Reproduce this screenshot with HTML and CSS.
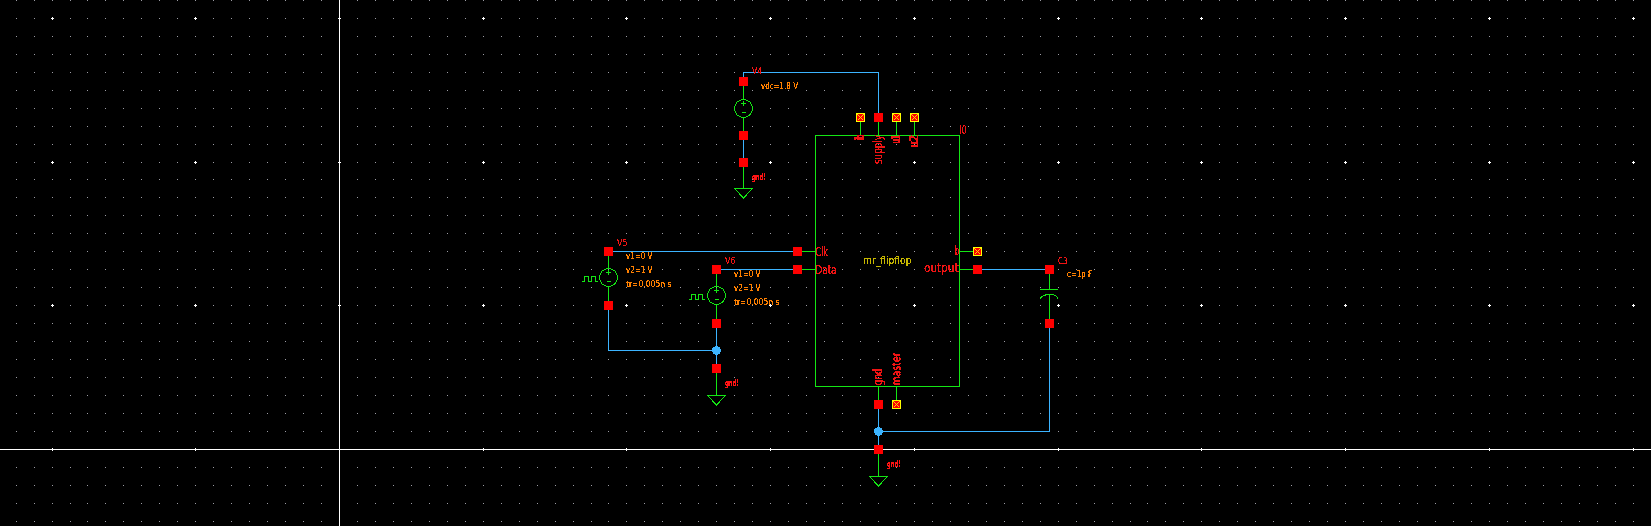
FILE: index.html
```html
<!DOCTYPE html>
<html lang="en">
<head>
<meta charset="utf-8">
<title>Schematic editor</title>
<link rel="stylesheet" href="styles.css">
</head>
<body>
<svg class="canvas" width="1651" height="526" viewBox="0 0 1651 526" xmlns="http://www.w3.org/2000/svg">
  <defs>
    <filter id="aliased" x="-20%" y="-50%" width="140%" height="200%" color-interpolation-filters="sRGB">
      <feComponentTransfer><feFuncA type="discrete" tableValues="0 1 1"/></feComponentTransfer>
    </filter>
    <g id="pad"><rect class="pad" x="-4.5" y="-4.5" width="9" height="9"/></g>
    <g id="pin">
      <rect class="pin-fill" x="-4.5" y="-4.5" width="9" height="9"/>
      <rect class="pin-edge" x="-4" y="-4" width="8" height="8"/>
      <path class="pin-x" d="M-3 -3L3 3M3 -3L-3 3"/>
    </g>
    <g id="dot"><circle class="junction" r="4.5"/></g>
    <g id="ground"><path class="sym" d="M-9 0H9L0 9.5Z"/></g>
    <g id="source">
      <circle class="sym-round" r="9"/>
      <path class="sym" d="M-2.5 -5H2.5M0 -8V-2.5M-2 4H2"/>
    </g>
    <path id="pulse" class="sym" d="M0 5.5H3V0H7V5.5H10V0H14V5.5H16"/>
  </defs>

  <path id="grid-dots" class="grid-dot"/>
  <path id="grid-major" class="grid-major"/>
  <path class="axis" d="M339.5 0V526M0 449.5H1651"/>

  <g class="wires-blue">
    <path d="M743.5 77V72.5H878.5V113"/>
    <path d="M743.5 140V158"/>
    <path d="M613 251.5H793"/>
    <path d="M721 269.5H793"/>
    <path d="M608.5 310V350.5H716.5"/>
    <path d="M716.5 328V364"/>
    <path d="M982 269.5H1045"/>
    <path d="M1049.5 328V431.5H878.5"/>
    <path d="M878.5 409V445"/>
  </g>

  <g class="wires-green">
    <path d="M743.5 86V99.5M743.5 117.5V131M743.5 167V188"/>
    <path d="M860.5 122V135M878.5 122V135M896.5 122V135M914.5 122V135"/>
    <path d="M802 251.5H815M802 269.5H815M959 251.5H973M959 269.5H973"/>
    <path d="M608.5 256V268.5M608.5 286.5V301"/>
    <path d="M716.5 274V286.5M716.5 304.5V319M716.5 373V395"/>
    <path d="M878.5 386V400M896.5 386V400M878.5 454V476"/>
    <path d="M1049.5 274V289.5M1040 289.5H1058M1049.5 294.5V319"/>
    <path d="M1040 298.5C1042 295.5 1046 294.5 1049.5 294.5C1053 294.5 1057 295.5 1058 298.5"/>
    <rect x="815.5" y="135.5" width="144" height="251"/>
  </g>

  <use href="#source" x="743.5" y="108.5"/>
  <use href="#source" x="608.5" y="277.5"/>
  <use href="#source" x="716.5" y="295.5"/>
  <use href="#pulse" x="581.5" y="276"/>
  <use href="#pulse" x="688.5" y="294"/>
  <use href="#ground" x="743.5" y="188.5"/>
  <use href="#ground" x="716.5" y="395.5"/>
  <use href="#ground" x="878.5" y="476.5"/>

  <use href="#dot" x="716.5" y="350.5"/>
  <use href="#dot" x="878.5" y="431.5"/>

  <use href="#pad" x="743.5" y="81.5"/>
  <use href="#pad" x="743.5" y="135.5"/>
  <use href="#pad" x="743.5" y="162.5"/>
  <use href="#pad" x="878.5" y="117.5"/>
  <use href="#pad" x="608.5" y="251.5"/>
  <use href="#pad" x="608.5" y="305.5"/>
  <use href="#pad" x="716.5" y="269.5"/>
  <use href="#pad" x="716.5" y="323.5"/>
  <use href="#pad" x="716.5" y="368.5"/>
  <use href="#pad" x="797.5" y="251.5"/>
  <use href="#pad" x="797.5" y="269.5"/>
  <use href="#pad" x="977.5" y="269.5"/>
  <use href="#pad" x="1049.5" y="269.5"/>
  <use href="#pad" x="1049.5" y="323.5"/>
  <use href="#pad" x="878.5" y="404.5"/>
  <use href="#pad" x="878.5" y="449.5"/>
  <use href="#pin" x="860.5" y="117.5"/>
  <use href="#pin" x="896.5" y="117.5"/>
  <use href="#pin" x="914.5" y="117.5"/>
  <use href="#pin" x="977.5" y="251.5"/>
  <use href="#pin" x="896.5" y="404.5"/>

  <g class="labels">
    <text class="t-red t-s" x="752" y="74" textLength="10" lengthAdjust="spacingAndGlyphs">V4</text>
    <text class="t-red t-s" x="617" y="246" textLength="10.5" lengthAdjust="spacingAndGlyphs">V5</text>
    <text class="t-red t-s" x="725" y="264" textLength="10.5" lengthAdjust="spacingAndGlyphs">V6</text>
    <text class="t-red t-s" x="1058" y="264" textLength="9.5" lengthAdjust="spacingAndGlyphs">C3</text>
    <text class="t-red t-l" x="959.5" y="134" textLength="7" lengthAdjust="spacingAndGlyphs">I0</text>

    <text class="t-orange" x="761" y="89" textLength="37" lengthAdjust="spacingAndGlyphs">vdc=1.8 V</text>
    <text class="t-orange" x="626" y="259" textLength="26.5" lengthAdjust="spacingAndGlyphs">v1=0 V</text>
    <text class="t-orange" x="626" y="273" textLength="26.5" lengthAdjust="spacingAndGlyphs">v2=1 V</text>
    <text class="t-orange" x="626" y="287" textLength="45.5" lengthAdjust="spacingAndGlyphs">tr=0.005n s</text>
    <text class="t-orange" x="734" y="277" textLength="26.5" lengthAdjust="spacingAndGlyphs">v1=0 V</text>
    <text class="t-orange" x="734" y="291" textLength="26.5" lengthAdjust="spacingAndGlyphs">v2=1 V</text>
    <text class="t-orange" x="734" y="305" textLength="45.5" lengthAdjust="spacingAndGlyphs">tr=0.005n s</text>
    <text class="t-orange" x="1067" y="277" textLength="25" lengthAdjust="spacingAndGlyphs">c=1p F</text>

    <text class="t-gnd" x="752" y="180" textLength="14" lengthAdjust="spacingAndGlyphs">gnd!</text>
    <text class="t-gnd" x="725" y="386" textLength="14" lengthAdjust="spacingAndGlyphs">gnd!</text>
    <text class="t-gnd" x="887" y="467" textLength="13.5" lengthAdjust="spacingAndGlyphs">gnd!</text>

    <text class="t-red t-m" x="815.5" y="255.5" textLength="12.5" lengthAdjust="spacingAndGlyphs">Clk</text>
    <text class="t-red t-m" x="815.5" y="273.5" textLength="21" lengthAdjust="spacingAndGlyphs">Data</text>
    <text class="t-red t-m" x="955" y="255" textLength="4.5" lengthAdjust="spacingAndGlyphs">b</text>
    <text class="t-red t-m" x="924" y="272" textLength="34.5" lengthAdjust="spacingAndGlyphs">output</text>
    <text class="t-yellow" x="863" y="264" textLength="48.5" lengthAdjust="spacingAndGlyphs">mr_flipflop</text>

    <text class="t-red t-m t-thick" transform="translate(864 140.5) rotate(-90)" textLength="5.5" lengthAdjust="spacingAndGlyphs">ib</text>
    <text class="t-red t-m" transform="translate(882 164) rotate(-90)" textLength="29" lengthAdjust="spacingAndGlyphs">supply</text>
    <text class="t-red t-m t-thick" transform="translate(900 143.5) rotate(-90)" textLength="8.5" lengthAdjust="spacingAndGlyphs">u1</text>
    <text class="t-red t-m t-thick" transform="translate(918 147.5) rotate(-90)" textLength="12.5" lengthAdjust="spacingAndGlyphs">u2</text>
    <text class="t-red t-m" transform="translate(882 385.5) rotate(-90)" textLength="17" lengthAdjust="spacingAndGlyphs">gnd</text>
    <text class="t-red t-m" transform="translate(900.5 385.5) rotate(-90)" textLength="33" lengthAdjust="spacingAndGlyphs">master</text>
  </g>
</svg>
<script src="grid.js"></script>
</body>
</html>
```

FILE: styles.css
```css
html, body {
  margin: 0;
  padding: 0;
  background: #000;
  overflow: hidden;
}

.canvas {
  display: block;
  background: #000;
}

.grid-dot {
  fill: none;
  stroke: #9c9ca4;
  stroke-width: 1;
  shape-rendering: crispEdges;
}

.grid-major,
.axis {
  fill: none;
  stroke: #fff;
  stroke-width: 1;
  shape-rendering: crispEdges;
}

.wires-blue path {
  fill: none;
  stroke: #3cb4ff;
  stroke-width: 1;
  shape-rendering: crispEdges;
}

.wires-green path,
.wires-green rect,
.sym,
.sym-round {
  fill: none;
  stroke: #14e614;
  stroke-width: 1;
  shape-rendering: crispEdges;
}

.pad {
  fill: #ff0000;
  shape-rendering: crispEdges;
}

.pin-fill {
  fill: #ff0000;
  shape-rendering: crispEdges;
}

.pin-edge {
  fill: none;
  stroke: #ffff00;
  stroke-width: 1;
  shape-rendering: crispEdges;
}

.pin-x {
  fill: none;
  stroke: #ffd800;
  stroke-width: 1;
  shape-rendering: crispEdges;
}

.junction {
  fill: #3cb4ff;
  shape-rendering: crispEdges;
}

.labels text {
  font-family: "DejaVu Sans", sans-serif;
  filter: url(#aliased);
}

.t-red { fill: #f01414; }
.t-s { font-size: 9.5px; }
.t-m { font-size: 11.5px; }
.t-l { font-size: 12px; }
.t-thick { stroke: #f01414; stroke-width: 0.5px; }
.t-orange { fill: #ff8000; font-size: 9.5px; }
.t-yellow { fill: #c8b800; font-size: 11px; }
.t-gnd { fill: #ff1414; font-size: 8.5px; font-weight: 700; }
```

FILE: grid.js
```js
// Schematic editor grid: one dot each 17.966px, snapped down to whole pixels.
(function () {
  var STEP = 17.966;
  var px = function (n) { return Math.floor(52.05 + STEP * n); };
  var py = function (m) { return Math.floor(18.3 + STEP * m); };
  var dots = [];
  var majors = [];
  for (var m = -1; m <= 28; m++) {
    for (var n = -3; n <= 89; n++) {
      var x = px(n), y = py(m);
      if (x < 0 || y < 0 || x > 1650 || y > 525) continue;
      if (n % 8 === 0 && m % 8 === 0) {
        majors.push('M' + (x - 1) + ' ' + (y + 0.5) + 'h3M' + (x + 0.5) + ' ' + (y - 1) + 'v3');
      } else {
        dots.push('M' + x + ' ' + (y + 0.5) + 'h1');
      }
    }
  }
  document.getElementById('grid-dots').setAttribute('d', dots.join(''));
  document.getElementById('grid-major').setAttribute('d', majors.join(''));
})();
```
